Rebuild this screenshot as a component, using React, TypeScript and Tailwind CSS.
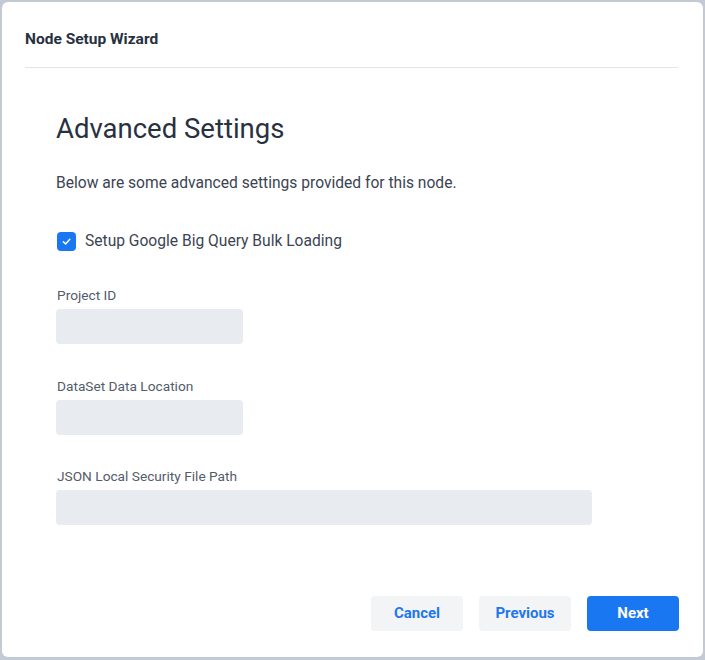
export default function App() {
  return (
    <div className="w-[705px] h-[660px] bg-[#c3cad4] p-[2px] pb-[3px] font-['Roboto',sans-serif]">
      <div className="w-full h-full bg-white rounded-md flex flex-col">
        {/* Header */}
        <div className="ml-[23px] mr-[25px] pt-[28px] pb-[19px] border-b border-[#e1e4e8]">
          <h2 className="text-[15.5px] leading-[18px] font-bold text-[#27313f]">Node Setup Wizard</h2>
        </div>

        {/* Body */}
        <div className="flex-1 px-[54px] pt-[46px] flex flex-col">
          <h1 className="text-[27.5px] leading-[30px] text-[#27313f]">Advanced Settings</h1>
          <p className="mt-[29px] text-[15.6px] leading-[20px] text-[#3b4452]">
            Below are some advanced settings provided for this node.
          </p>

          <label className="mt-[38px] flex items-center gap-[9px]">
            <span className="w-[19px] h-[19px] ml-[1px] rounded-[4px] bg-[#1a77f2] flex items-center justify-center">
              <svg width="11" height="11" viewBox="0 0 12 12" fill="none">
                <path d="M2.5 6.2 L5 8.6 L9.6 3.6" stroke="white" strokeWidth="1.6" strokeLinecap="round" strokeLinejoin="round" />
              </svg>
            </span>
            <span className="text-[15.6px] leading-[20px] text-[#3b4452]">Setup Google Big Query Bulk Loading</span>
          </label>

          <div className="mt-[36px] flex flex-col">
            <span className="text-[13.7px] leading-[16px] text-[#535c6a] ml-[1px]">Project ID</span>
            <div className="mt-[6px] w-[187px] h-[35px] rounded-[4px] bg-[#e8ebef]" />
          </div>

          <div className="mt-[34px] flex flex-col">
            <span className="text-[13.7px] leading-[16px] text-[#535c6a] ml-[1px]">DataSet Data Location</span>
            <div className="mt-[6px] w-[187px] h-[35px] rounded-[4px] bg-[#e8ebef]" />
          </div>

          <div className="mt-[33px] flex flex-col">
            <span className="text-[13.7px] leading-[16px] text-[#535c6a] ml-[1px]">JSON Local Security File Path</span>
            <div className="mt-[6px] w-[536px] h-[35px] rounded-[4px] bg-[#e8ebef]" />
          </div>
        </div>

        {/* Footer */}
        <div className="flex justify-end gap-[16px] pr-[24px] pb-[26px]">
          <button className="w-[92px] h-[35px] rounded-[4px] bg-[#f3f4f6] text-[15px] font-bold text-[#1f77ec]">Cancel</button>
          <button className="w-[92px] h-[35px] rounded-[4px] bg-[#f3f4f6] text-[15px] font-bold text-[#1f77ec]">Previous</button>
          <button className="w-[92px] h-[35px] rounded-[4px] bg-[#1a77f2] text-[15px] font-bold text-white">Next</button>
        </div>
      </div>
    </div>
  );
}
